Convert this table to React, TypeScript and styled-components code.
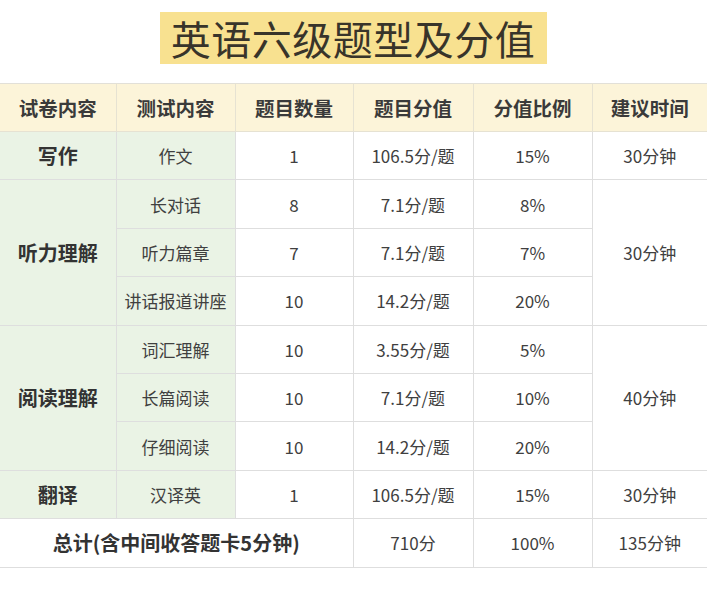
import React from "react";
import styled, { createGlobalStyle } from "styled-components";

const Global = createGlobalStyle`
  html, body { margin: 0; padding: 0; background: #ffffff; }
  body { font-family: "Noto Sans CJK SC", "Noto Sans", sans-serif; color: #333; }
`;

const Page = styled.div`
  width: 707px;
  display: flex;
  flex-direction: column;
  align-items: center;
  padding-top: 12px;
`;

const Title = styled.h1`
  margin: 0;
  height: 52px;
  line-height: 52px;
  padding: 0 12px 0 11px;
  background: #f8e190;
  font-size: 40px;
  font-weight: 400;
  color: #38342a;
  letter-spacing: 0.5px;
  transform: translateX(-0px);
`;

const Table = styled.table`
  margin-top: 19px;
  width: 707px;
  border-collapse: collapse;
  table-layout: fixed;
  border-top: 1px solid #e2e0d8;
`;

const HeadCell = styled.th`
  height: 47px;
  padding: 0;
  background: #fcf4d9;
  border: 1px solid #e6e2d2;
  border-top: none;
  font-size: 19.5px;
  font-weight: 700;
  color: #3a3a3a;
  text-align: center;
  &:first-child { border-left: none; }
  &:last-child { border-right: none; }
`;

const Row = styled.tr`
  height: 48.4px;
`;

const Cell = styled.td<{ $tone?: "green" | "white"; $strong?: boolean }>`
  padding: 0;
  text-align: center;
  border: 1px solid #dedede;
  background: ${(p) => (p.$tone === "green" ? "#eaf3e5" : "#ffffff")};
  font-size: ${(p) => (p.$strong ? "20px" : "17px")};
  font-weight: ${(p) => (p.$strong ? 700 : 400)};
  color: ${(p) => (p.$strong ? "#333" : "#404040")};
  white-space: nowrap;
  &:first-child { border-left: none; }
  &:last-child { border-right: none; }
`;

type Sub = { name: string; count: string; score: string; ratio: string };
type Section = { title: string; time: string; subs: Sub[] };

const sections: Section[] = [
  { title: "写作", time: "30分钟", subs: [{ name: "作文", count: "1", score: "106.5分/题", ratio: "15%" }] },
  {
    title: "听力理解",
    time: "30分钟",
    subs: [
      { name: "长对话", count: "8", score: "7.1分/题", ratio: "8%" },
      { name: "听力篇章", count: "7", score: "7.1分/题", ratio: "7%" },
      { name: "讲话报道讲座", count: "10", score: "14.2分/题", ratio: "20%" },
    ],
  },
  {
    title: "阅读理解",
    time: "40分钟",
    subs: [
      { name: "词汇理解", count: "10", score: "3.55分/题", ratio: "5%" },
      { name: "长篇阅读", count: "10", score: "7.1分/题", ratio: "10%" },
      { name: "仔细阅读", count: "10", score: "14.2分/题", ratio: "20%" },
    ],
  },
  { title: "翻译", time: "30分钟", subs: [{ name: "汉译英", count: "1", score: "106.5分/题", ratio: "15%" }] },
];

const headers = ["试卷内容", "测试内容", "题目数量", "题目分值", "分值比例", "建议时间"];
const widths = [116, 119, 118, 120, 119, 115];

export default function App() {
  return (
    <>
      <Global />
      <Page>
        <Title>英语六级题型及分值</Title>
        <Table>
          <colgroup>
            {widths.map((w, i) => (
              <col key={i} style={{ width: w }} />
            ))}
          </colgroup>
          <thead>
            <tr>
              {headers.map((h) => (
                <HeadCell key={h}>{h}</HeadCell>
              ))}
            </tr>
          </thead>
          <tbody>
            {sections.map((s) =>
              s.subs.map((sub, i) => (
                <Row key={s.title + sub.name}>
                  {i === 0 && (
                    <Cell $tone="green" $strong rowSpan={s.subs.length}>
                      {s.title}
                    </Cell>
                  )}
                  <Cell $tone="green">{sub.name}</Cell>
                  <Cell>{sub.count}</Cell>
                  <Cell>{sub.score}</Cell>
                  <Cell>{sub.ratio}</Cell>
                  {i === 0 && <Cell rowSpan={s.subs.length}>{s.time}</Cell>}
                </Row>
              ))
            )}
            <Row>
              <Cell colSpan={3} $strong>
                总计(含中间收答题卡5分钟)
              </Cell>
              <Cell>710分</Cell>
              <Cell>100%</Cell>
              <Cell>135分钟</Cell>
            </Row>
          </tbody>
        </Table>
      </Page>
    </>
  );
}
